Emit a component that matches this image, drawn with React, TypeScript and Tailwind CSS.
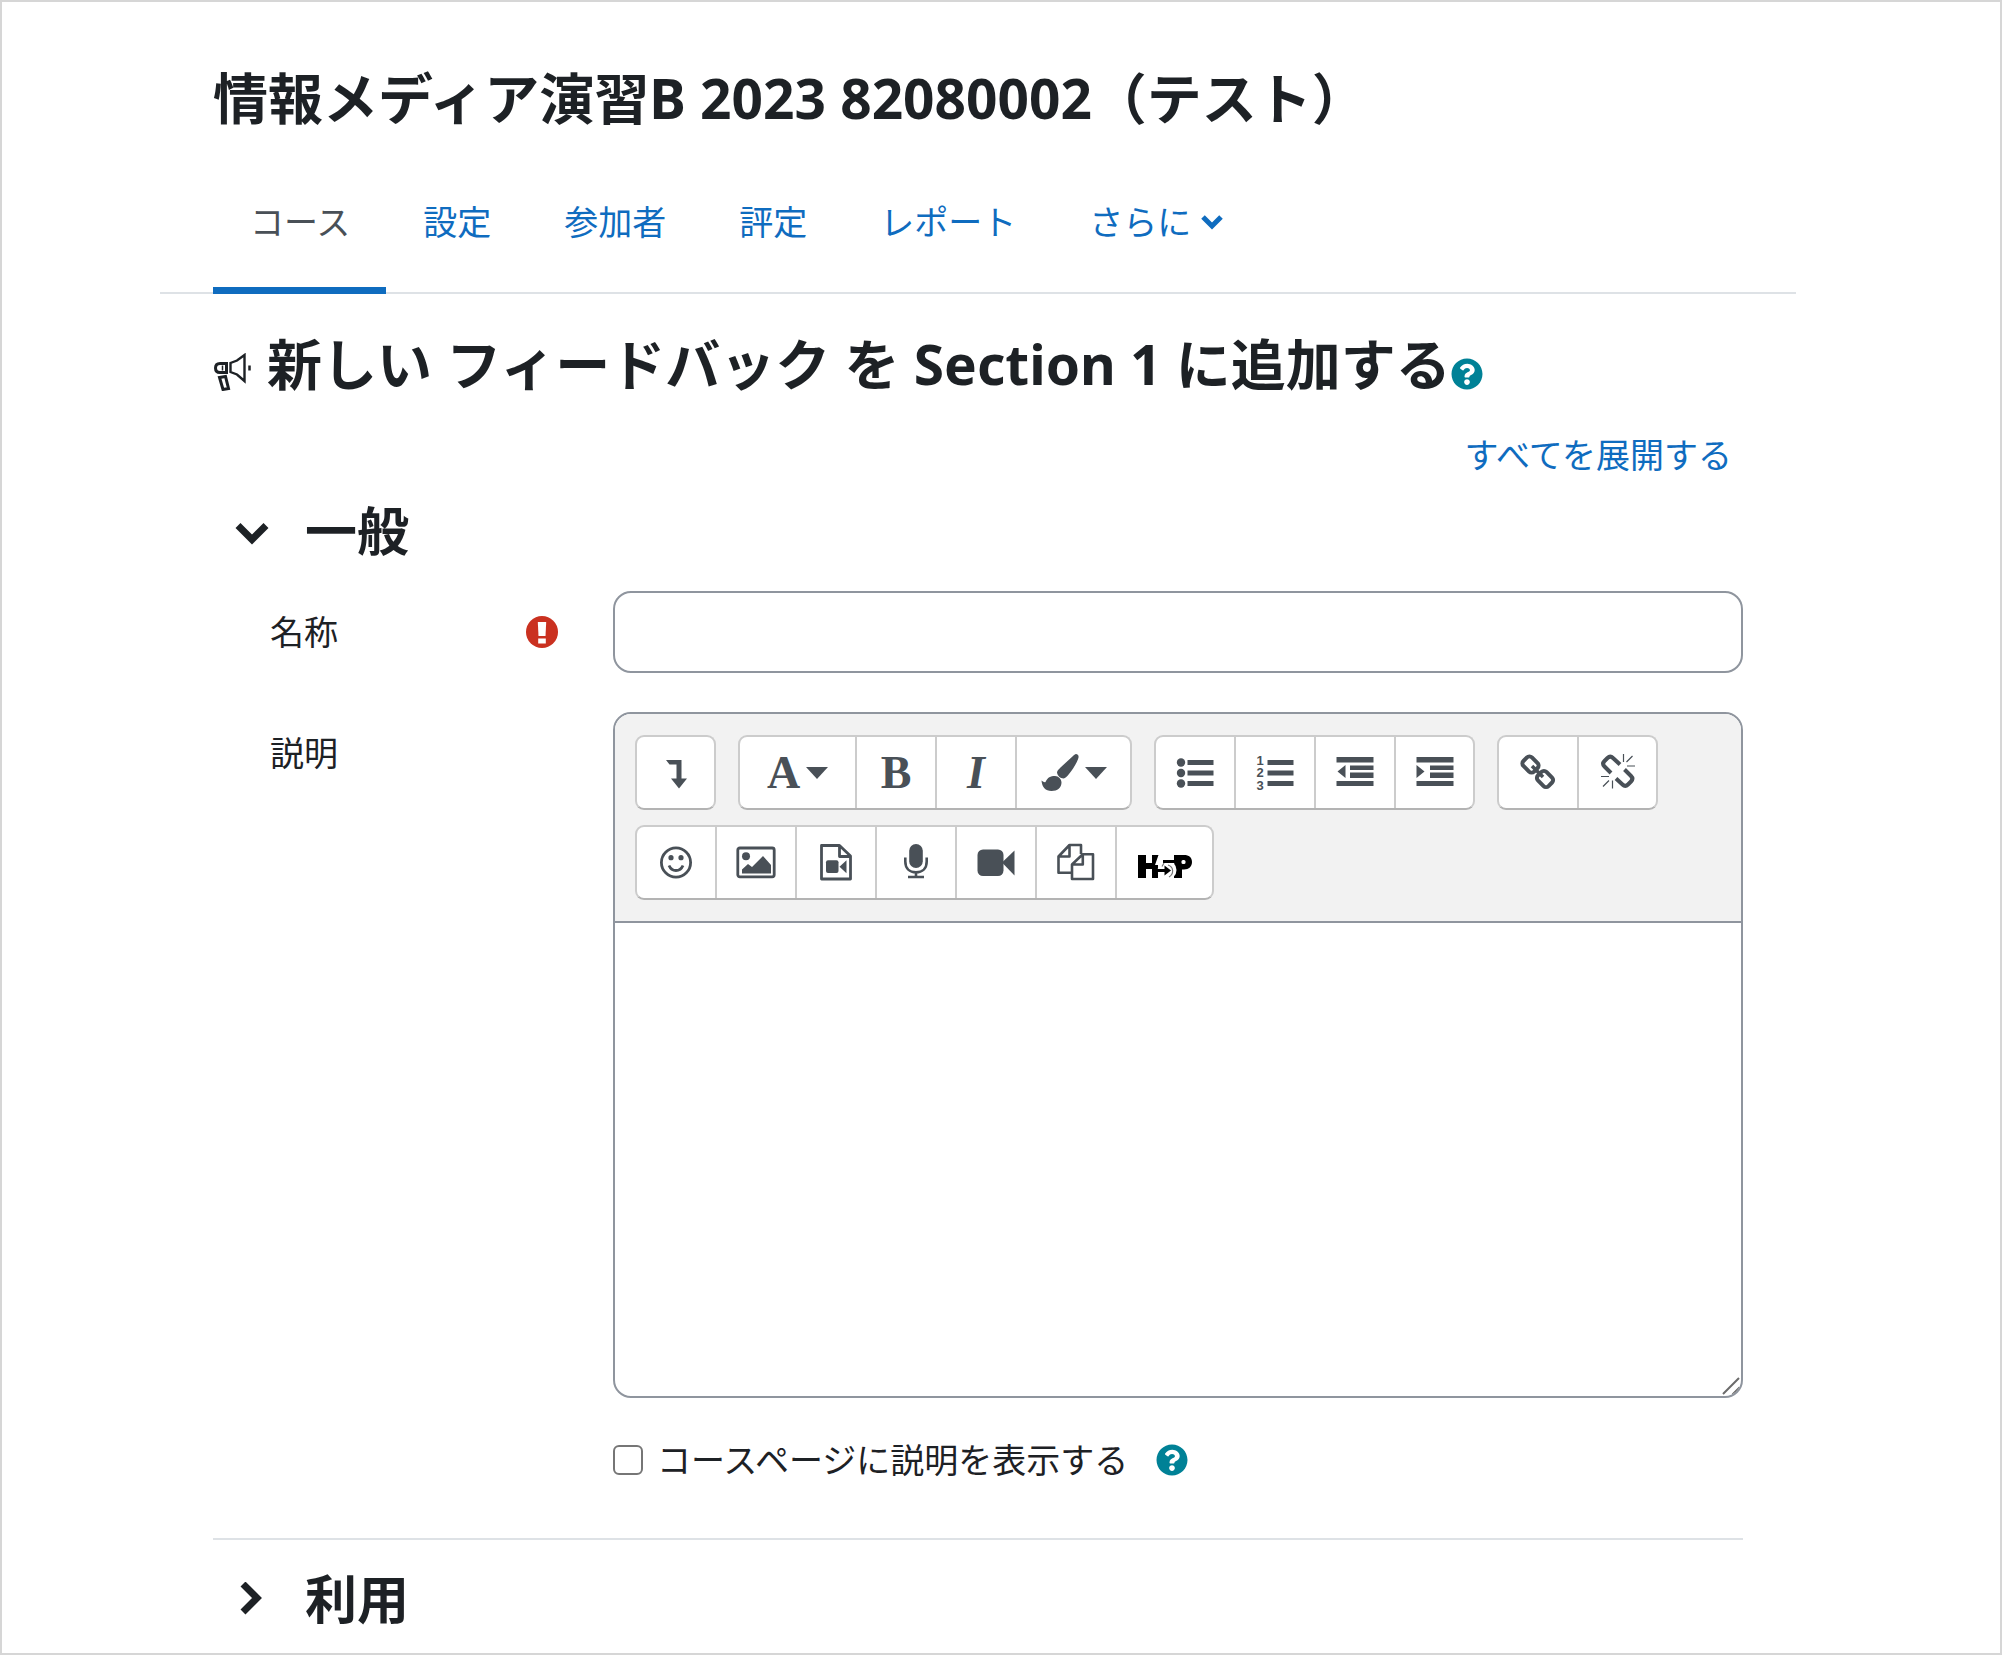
import React, { useState } from "react";
import { FaQuestionCircle } from "react-icons/fa";

type IconProps = { children: React.ReactNode; w?: number };

function Icon({ children, w = 40 }: IconProps) {
  return (
    <svg width={w} height={40} viewBox={`0 0 ${w} 40`} fill="currentColor" aria-hidden="true" className="shrink-0">
      {children}
    </svg>
  );
}

function Chevron({ dir }: { dir: "down" | "right" }) {
  return (
    <svg width="34" height="34" viewBox="0 0 34 34" fill="none" stroke="currentColor" strokeWidth="7" aria-hidden="true">
      {dir === "down" ? <path d="M3 11.500 17 25.500 31 11.500" /> : <path d="M8 2 22 16 8 30" />}
    </svg>
  );
}

function HelpButton() {
  return (
    <button type="button" aria-label="ヘルプ" className="block shrink-0 text-[#008196]">
      <FaQuestionCircle size={32} />
    </button>
  );
}

function RequiredIcon() {
  return (
    <svg width="32" height="32" viewBox="0 0 32 32" role="img" aria-label="必須" className="shrink-0">
      <circle cx="16" cy="16" r="16" fill="#ca3120" />
      <path d="M11.8 6h8.4l-.7 14h-7z" fill="#fff" />
      <rect x="12.2" y="22.5" width="7.6" height="5" fill="#fff" />
    </svg>
  );
}

function MegaphoneIcon() {
  return (
    <svg width="38" height="38" viewBox="0 0 38 38" fill="none" stroke="#1d2125" strokeWidth="2.400" aria-hidden="true">
      <path d="M31.500 2v26L24 21.500l-6.500-2.500v-9l6.500-2.500z" />
      <path d="M7 10.500h6.500v9H7c-3 0-4.500-1.500-4.500-4.500s1.500-4.500 4.500-4.500z" strokeWidth="3" />
      <path d="M9.500 12.500v5" strokeWidth="1.500" />
      <path d="M6.500 24.500l6-1 3 12-5.500 1z" strokeWidth="3" />
      <path d="M36.500 12.500v5" strokeWidth="2.500" />
    </svg>
  );
}

function Caret() {
  return (
    <svg width="22" height="12" viewBox="0 0 22 12" fill="currentColor" aria-hidden="true">
      <path d="M0 0h22L11 12z" />
    </svg>
  );
}

const icons = {
  expand: (
    <Icon>
      <path d="M10 7h15.500v18.500H31l-8 10-8-10h5.500v-14h-7z" />
    </Icon>
  ),
  brush: (
    <Icon w={38}>
      <path d="M35 1C36.500 1 38 2.200 37.500 4.500 36.500 9 32 16 28 21c-2 2.500-3.500 4.200-5.500 4.500-3 0-6.200-3-6.500-6 .2-1.700 1.500-3 3.500-5L32 3c1-1 2-2 3-2z" />
      <path d="M14 23c3.500 0 6.500 3 6.500 6.500 0 5-4 8.500-10 8.500S1 34 .5 27.500c2 1.500 3 2 4 1.500 2-4.500 5-6 9.500-6z" />
    </Icon>
  ),
  ul: (
    <Icon>
      {[9.5, 20, 30.5].map((y) => (
        <g key={y}>
          <circle cx="6" cy={y} r="4.200" />
          <rect x="12.500" y={y - 2.5} width="26" height="5" />
        </g>
      ))}
    </Icon>
  ),
  ol: (
    <Icon>
      {[7, 19.5, 32].map((y, i) => (
        <text key={y} x="1.500" y={y + 4.5} fontSize="13" fontWeight="700" fontFamily="Liberation Sans, sans-serif">
          {i + 1}
        </text>
      ))}
      <path d="M12.500 7h26v5h-26zM12.500 17.500h26v5h-26zM12.500 28h26v5h-26z" />
    </Icon>
  ),
  outdent: (
    <Icon>
      <path d="M1.500 4H38.500v5.500H1.500zM15 12.500H38.500v4.500H15zM15 19.500H38.500v5.500H15zM1.500 28H38.500v5H1.500zM2.500 18.500l8-6.500v13z" />
    </Icon>
  ),
  indent: (
    <Icon>
      <path d="M1.500 4H38.500v5.500H1.500zM15 12.500H38.500v4.500H15zM15 19.500H38.500v5.500H15zM1.500 28H38.500v5H1.500zM9.500 18.500l-8-6.500v13z" />
    </Icon>
  ),
  link: (
    <Icon>
      <g fill="none" stroke="currentColor" strokeWidth="4">
        <rect x="5" y="5.500" width="15" height="12" rx="3.500" transform="rotate(45 12.500 11.500)" />
        <rect x="19.500" y="20" width="15" height="12" rx="3.500" transform="rotate(45 27 26)" />
        <path d="M14 13l11 11" strokeWidth="3.500" />
      </g>
    </Icon>
  ),
  unlink: (
    <Icon>
      <g fill="none" stroke="currentColor" strokeWidth="4" strokeLinejoin="round">
        <path d="M13 20l-6.500-6.500c-2-2-2-3.500 0-5.500l3-3c2-2 3.500-2 5.500 0l7 6.500" />
        <path d="M26.500 16.500l6.500 6.500c2 2 2 3.500 0 5.500l-3 3c-2 2-3.500 2-5.500 0l-6.500-6" />
      </g>
      <g fill="none" stroke="currentColor" strokeWidth="1.200">
        <path d="M25.500 1v8M34.500 3l-6 6M37 13h-8M3 23.500h8M5 33.500l6-6M14.500 35.500v-8" />
      </g>
    </Icon>
  ),
  smile: (
    <Icon>
      <circle cx="20" cy="19.500" r="14.600" fill="none" stroke="currentColor" strokeWidth="2.800" />
      <circle cx="15" cy="14.700" r="2.600" />
      <circle cx="25" cy="14.700" r="2.600" />
      <path d="M13 22.500c1.500 3.500 4 5 7 5s5.500-1.500 7-5" fill="none" stroke="currentColor" strokeWidth="2.800" />
    </Icon>
  ),
  image: (
    <Icon>
      <rect x="1.800" y="5" width="36.400" height="28.800" rx="2" fill="none" stroke="currentColor" strokeWidth="2.800" />
      <circle cx="10" cy="13.300" r="4" />
      <path d="M6 30.500v-4l6-5.500 4 3L27 13l8 9v8.500z" />
    </Icon>
  ),
  fileVideo: (
    <Icon>
      <path d="M5.500 2.500h18l11 10.500v23h-29zM23.500 2.500v11h11" fill="none" stroke="currentColor" strokeWidth="2.800" strokeLinejoin="round" />
      <rect x="10" y="17.300" width="12.500" height="12.700" rx="2" />
      <path d="M23.500 23.700l7-6.500v13z" />
    </Icon>
  ),
  mic: (
    <Icon>
      <rect x="13.200" y="1" width="13.600" height="24" rx="6.800" />
      <path d="M9.300 14.500v4c0 7 4.500 10.800 10.700 10.800s10.700-3.800 10.700-10.800v-4M20 29v5M12 34h16" fill="none" stroke="currentColor" strokeWidth="2.600" />
    </Icon>
  ),
  video: (
    <Icon>
      <rect x="1.500" y="6.500" width="26" height="26.500" rx="5.500" />
      <path d="M26 19.500L38.500 7.500v25z" />
    </Icon>
  ),
  files: (
    <Icon>
      <g fill="none" stroke="currentColor" strokeWidth="2.600" strokeLinejoin="round">
        <path d="M15 29.700H2.500V13.500L13.500 2H25v9M13.500 2v11.500h-11" />
        <path d="M16 21.500v14.500h21V11.300H26.800zM26.800 11.300v10.200H16" />
      </g>
    </Icon>
  ),
  h5p: (
    <svg width="56" height="40" viewBox="0 0 56 40" role="img" aria-label="H5P">
      <path d="M1 12h8v8h6v-8h6.500l-3.500 10h3v13h-6v-9H9v9H1z" fill="#000" />
      <path d="M37 12h10c5 0 8 2.500 8 7s-3 7.500-8 7.500h-2V35h-8z" fill="#000" />
      <rect x="44.500" y="17" width="4" height="4" rx="1.500" fill="#fff" />
      <circle cx="30" cy="27" r="9.500" fill="#fff" />
      <path d="M18 27.500h10M26 18.500h11" stroke="#000" strokeWidth="3" />
      <path d="M27.500 22.500l6.500 5-6.500 5z" fill="#000" />
      <path d="M27 20l-2 3.500M31 22c6 2 6 9 1 12" stroke="#777" strokeWidth="1.200" fill="none" />
    </svg>
  ),
};

const letter = "font-[Liberation_Serif,serif] text-[46px] leading-10 font-bold";

type Tool = { label: string; icon: React.ReactNode; size?: string };

const toolRows: Tool[][][] = [
  [
    [{ label: "表示切替", icon: icons.expand }],
    [
      {
        label: "段落スタイル",
        size: "w-[117px]",
        icon: (
          <>
            <span className={letter}>A</span>
            <Caret />
          </>
        ),
      },
      { label: "太字", icon: <span className={letter}>B</span> },
      { label: "斜体", icon: <span className={`${letter} italic`}>I</span> },
      {
        label: "文字色",
        size: "w-[113px]",
        icon: (
          <>
            {icons.brush}
            <Caret />
          </>
        ),
      },
    ],
    [
      { label: "箇条書き", icon: icons.ul },
      { label: "番号付きリスト", icon: icons.ol },
      { label: "インデント解除", icon: icons.outdent },
      { label: "インデント", icon: icons.indent },
    ],
    [
      { label: "リンク", icon: icons.link },
      { label: "リンク解除", icon: icons.unlink },
    ],
  ],
  [
    [
      { label: "絵文字", icon: icons.smile },
      { label: "画像", icon: icons.image },
      { label: "メディア", icon: icons.fileVideo },
      { label: "録音", icon: icons.mic },
      { label: "録画", icon: icons.video },
      { label: "ファイル管理", icon: icons.files },
      { label: "H5P", icon: icons.h5p, size: "w-[95px]" },
    ],
  ],
];

function Toolbar() {
  return (
    <div className="flex flex-col gap-[15px] border-b-2 border-[#8f959e] bg-[#f2f2f2] px-5 pt-[21px] pb-[21px]">
      {toolRows.map((row, r) => (
        <div key={r} className="flex flex-wrap gap-[22px]">
          {row.map((group, g) => (
            <div
              key={g}
              className="flex h-[75px] divide-x-2 divide-[#ccc] overflow-hidden rounded-[9px] border-2 border-[#ccc] border-b-[#b3b3b3] bg-white"
            >
              {group.map((tool) => (
                <button
                  key={tool.label}
                  type="button"
                  title={tool.label}
                  className={`flex items-center justify-center gap-1.5 text-[#495057] ${tool.size ?? "w-20 last:w-[77px]"}`}
                >
                  {tool.icon}
                </button>
              ))}
            </div>
          ))}
        </div>
      ))}
    </div>
  );
}

const tabs = ["コース", "設定", "参加者", "評定", "レポート", "さらに"];

export default function App() {
  const [shown, setShown] = useState(false);
  return (
    <div className="min-h-screen border-2 border-[#d6d6d6] bg-white pr-[204px] pl-[158px] font-['Noto_Sans','Noto_Sans_CJK_JP',sans-serif] text-[34px] leading-[48px] text-[#1d2125]">
      <header className="px-[53px] pt-[63px]">
        <h1 className="text-[55px] leading-[66px] font-bold">情報メディア演習B 2023 82080002（テスト）</h1>
      </header>

      <nav className="mt-[27px] flex border-b-2 border-[#dee2e6] px-[53px]">
        {tabs.map((tab, i) => (
          <a
            key={tab}
            href="#"
            className={`-mb-0.5 flex items-center gap-2.5 border-b-[7px] pt-10 pr-9 pb-[41px] pl-[37px] ${
              i === 0 ? "border-[#0f6cbf] text-[#495057]" : "border-transparent text-[#0f6cbf]"
            }`}
          >
            {tab}
            {tab === "さらに" && (
              <svg width="22" height="16" viewBox="0 0 22 16" fill="none" stroke="currentColor" strokeWidth="5" aria-hidden="true">
                <path d="M2 3l9 9 9-9" />
              </svg>
            )}
          </a>
        ))}
      </nav>

      <main className="px-[53px] pt-[37px]">
        <div className="flex items-center">
          <div className="shrink-0 pt-4">
            <MegaphoneIcon />
          </div>
          <h2 className="ml-4 text-[55px] leading-[66px] font-bold">新しい フィードバック を Section 1 に追加する</h2>
          <div className="pt-5">
            <HelpButton />
          </div>
        </div>

        <div className="mt-[34px] flex justify-end pr-[11px]">
          <a href="#" className="text-[#0f6cbf]">
            すべてを展開する
          </a>
        </div>

        <form onSubmit={(e) => e.preventDefault()}>
          <h3 className="mt-[22px] text-[52px] leading-[60px] font-bold">
            <button type="button" className="flex items-center gap-9 pl-[22px]">
              <Chevron dir="down" />
              一般
            </button>
          </h3>

          <div className="mt-[30px] flex">
            <div className="flex w-[400px] shrink-0 items-center justify-between pr-[55px] pl-[57px]">
              <label htmlFor="name">名称</label>
              <RequiredIcon />
            </div>
            <input id="name" type="text" className="h-[82px] min-w-0 flex-1 rounded-[18px] border-2 border-[#8f959e] px-6" />
          </div>

          <div className="mt-[39px] flex">
            <div className="w-[400px] shrink-0 pt-[17px] pl-[57px]">
              <label htmlFor="description">説明</label>
            </div>
            <div className="relative min-w-0 flex-1 overflow-hidden rounded-[18px] border-2 border-[#8f959e]">
              <Toolbar />
              <textarea id="description" className="block h-[473px] w-full resize-none px-6 py-3 outline-none" />
              <svg width="20" height="20" viewBox="0 0 20 20" fill="none" stroke="#6b6b6b" strokeWidth="2" aria-hidden="true" className="absolute right-0 bottom-0">
                <path d="M2 18L18 2M11.500 18.500l7-7" />
              </svg>
            </div>
          </div>

          <div className="mt-[38px] ml-[400px] flex items-center">
            <input
              id="show"
              type="checkbox"
              checked={shown}
              onChange={(e) => setShown(e.target.checked)}
              className="size-[30px] appearance-none rounded-[6px] border-2 border-[#767676] checked:bg-[#0f6cbf]"
            />
            <label htmlFor="show" className="mr-7 ml-3.5">
              コースページに説明を表示する
            </label>
            <HelpButton />
          </div>

          <h3 className="mt-[54px] border-t-2 border-[#dee2e6] pt-[29px] text-[52px] leading-[60px] font-bold">
            <button type="button" className="flex items-center gap-9 pl-[22px]">
              <Chevron dir="right" />
              利用
            </button>
          </h3>
        </form>
      </main>
    </div>
  );
}
